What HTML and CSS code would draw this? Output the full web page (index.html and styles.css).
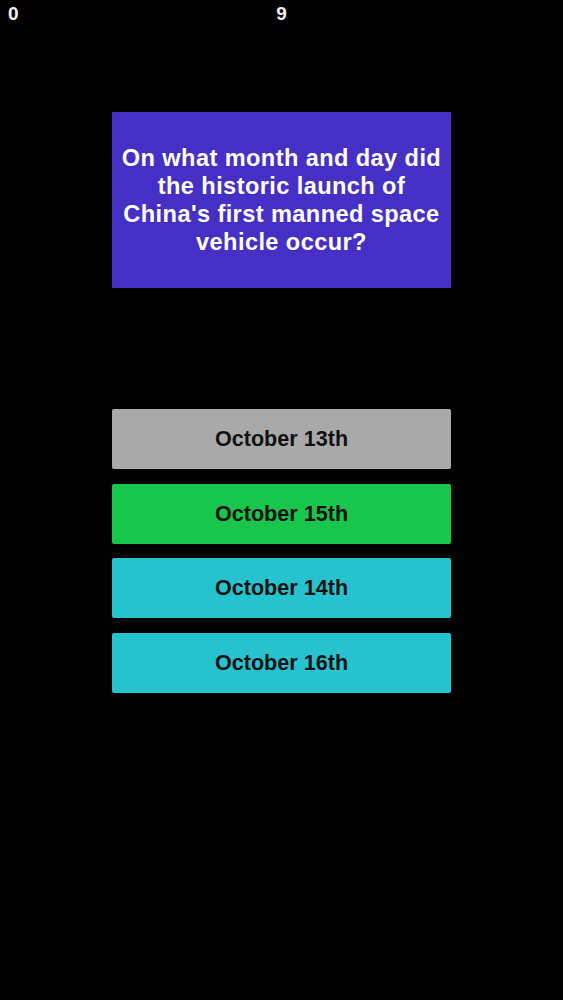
FILE: index.html
```html
<!DOCTYPE html>
<html>
<head>
<meta charset="utf-8">
<link rel="stylesheet" href="styles.css">
</head>
<body>
<div class="topbar">
  <span class="score">0</span>
  <span class="count">9</span>
  <span></span>
</div>
<main class="game">
  <div class="question">On what month and day did the historic launch of China's first manned space vehicle occur?</div>
  <div class="answers">
    <div class="answer gray">October 13th</div>
    <div class="answer green">October 15th</div>
    <div class="answer cyan">October 14th</div>
    <div class="answer cyan">October 16th</div>
  </div>
</main>
</body>
</html>
```
FILE: styles.css
```css
html, body {
  margin: 0;
  padding: 0;
  background: #000;
  height: 100%;
}
body {
  font-family: "Liberation Sans", Arial, sans-serif;
  font-weight: bold;
}
.topbar {
  display: grid;
  grid-template-columns: 1fr auto 1fr;
  align-items: center;
  height: 28px;
  padding: 0 8px;
  color: #f2f2f2;
  font-size: 19px;
}
.score { justify-self: start; }
.count { justify-self: center; }
.game {
  width: 339px;
  margin: 84px auto 0;
  display: flex;
  flex-direction: column;
}
.question {
  background: #452fc4;
  height: 176px;
  box-sizing: border-box;
  display: flex;
  align-items: center;
  justify-content: center;
  text-align: center;
  color: #fff;
  font-size: 23.6px;
  letter-spacing: 0.4px;
  line-height: 28px;
  padding: 0 5px;
  border-radius: 1px;
}
.answers {
  margin-top: 121px;
  display: flex;
  flex-direction: column;
  gap: 14.7px;
}
.answer {
  height: 60px;
  display: flex;
  align-items: center;
  justify-content: center;
  color: #111;
  font-size: 21.6px;
  border-radius: 2px;
}
.gray { background: #a9a9aa; }
.green { background: #17c64b; }
.cyan { background: #26c3cf; }
```
